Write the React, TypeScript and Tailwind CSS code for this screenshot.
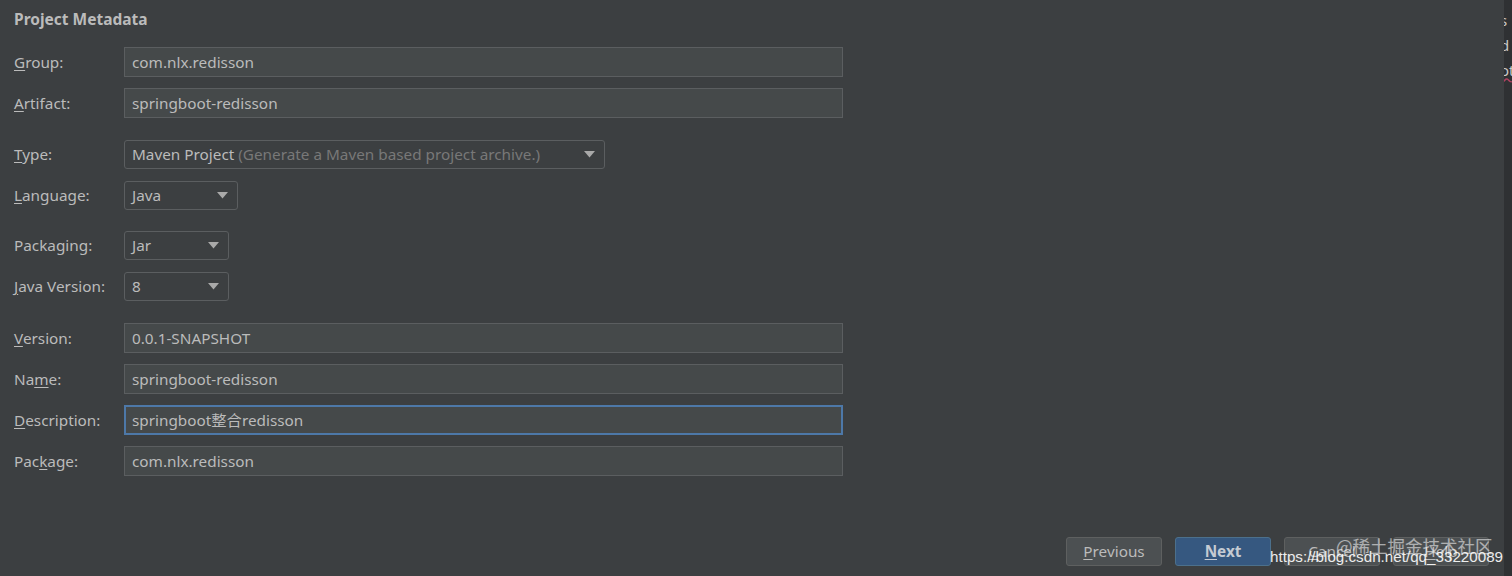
import React from 'react';

const font = { fontFamily: '"Noto Sans", "Noto Sans CJK SC", sans-serif' };

function Label({ text, mnemonic }: { text: string; mnemonic?: number }) {
  if (mnemonic === undefined) return <span>{text}</span>;
  return (
    <span>
      {text.slice(0, mnemonic)}
      <span className="underline underline-offset-2">{text[mnemonic]}</span>
      {text.slice(mnemonic + 1)}
    </span>
  );
}

function Arrow() {
  return (
    <svg width="11" height="7" viewBox="0 0 11 7" className="shrink-0">
      <path d="M0 0 H11 L5.5 6.5 Z" fill="#a9a9a9" />
    </svg>
  );
}

function Row({ label, mnemonic, children, className = '' }: { label: string; mnemonic?: number; children: React.ReactNode; className?: string }) {
  return (
    <div className={`flex items-center ${className}`}>
      <div className="w-[110px] shrink-0 text-[15.3px] text-[#bbbbbb]">
        <Label text={label} mnemonic={mnemonic} />
      </div>
      {children}
    </div>
  );
}

function TextInput({ value, focused = false }: { value: string; focused?: boolean }) {
  return (
    <div
      className={`w-[719px] h-[30px] flex items-center bg-[#45494a] text-[15.3px] text-[#bbbbbb] ${
        focused ? 'border-2 border-[#4d78a8] px-[6px]' : 'border border-[#5b5e60] px-[7px]'
      }`}
    >
      {value}
    </div>
  );
}

function Select({ width, children }: { width: string; children: React.ReactNode }) {
  return (
    <div className={`${width} h-[29px] flex items-center justify-between pl-[7px] pr-[9px] rounded-[3px] border border-[#5b5e60] bg-[#3c3f41] text-[15.3px] text-[#bbbbbb]`}>
      <span className="whitespace-nowrap">{children}</span>
      <Arrow />
    </div>
  );
}

function Button({ text, mnemonic, primary = false }: { text: string; mnemonic: number; primary?: boolean }) {
  return (
    <div
      className={`w-[96px] h-[29px] flex items-center justify-center rounded-[3px] border text-[15.3px] ${
        primary ? 'bg-[#365880] border-[#4c708c] font-bold text-[#c5cbd3]' : 'bg-[#4c5052] border-[#5e6060] text-[#bbbbbb]'
      }`}
    >
      <Label text={text} mnemonic={mnemonic} />
    </div>
  );
}

export default function App() {
  return (
    <div className="w-[1512px] h-[576px] flex bg-[#3c3f41] overflow-hidden relative" style={font}>
      <div className="flex-1 flex flex-col pl-[14px] pt-[8px] pr-[15px]">
        <div className="text-[15.5px] font-bold text-[#bbbbbb] h-[22px] leading-[22px]">Project Metadata</div>

        <div className="flex flex-col gap-[11px] mt-[17px]">
          <Row label="Group:" mnemonic={0}><TextInput value="com.nlx.redisson" /></Row>
          <Row label="Artifact:" mnemonic={0}><TextInput value="springboot-redisson" /></Row>

          <Row label="Type:" mnemonic={0} className="mt-[11px]">
            <Select width="w-[481px]">
              Maven Project <span className="text-[#787878]">(Generate a Maven based project archive.)</span>
            </Select>
          </Row>
          <Row label="Language:" mnemonic={0} className="mt-[1px]">
            <Select width="w-[114px]">Java</Select>
          </Row>

          <Row label="Packaging:" className="mt-[10px]">
            <Select width="w-[105px]">Jar</Select>
          </Row>
          <Row label="Java Version:" mnemonic={0} className="mt-[1px]">
            <Select width="w-[105px]">8</Select>
          </Row>

          <Row label="Version:" mnemonic={0} className="mt-[11px]"><TextInput value="0.0.1-SNAPSHOT" /></Row>
          <Row label="Name:" mnemonic={2}><TextInput value="springboot-redisson" /></Row>
          <Row label="Description:" mnemonic={0}><TextInput value="springboot整合redisson" focused /></Row>
          <Row label="Package:" mnemonic={3}><TextInput value="com.nlx.redisson" /></Row>
        </div>

        <div className="flex justify-end gap-[13px] mt-auto mb-[10px]">
          <Button text="Previous" mnemonic={0} />
          <Button text="Next" mnemonic={0} primary />
          <Button text="Cancel" mnemonic={0} />
          <Button text="Help" mnemonic={0} />
        </div>
      </div>

      <div className="w-[8px] shrink-0 bg-[#2f3133] overflow-hidden text-[15px] text-[#c8c8c8] relative">
        <div className="absolute left-[-4px] top-[8px] leading-[25px] whitespace-nowrap">
          <div>s</div>
          <div>d</div>
          <div className="underline decoration-wavy decoration-[#b04060]">ot</div>
        </div>
      </div>

      <div className="absolute left-[1336px] top-[533px] text-[17.5px] text-white/55 whitespace-nowrap" style={{ fontFamily: '"Noto Sans CJK SC", sans-serif' }}>
        @稀土掘金技术社区
      </div>
      <div className="absolute left-[1270px] top-[546px] text-[15.2px] text-white/90 whitespace-nowrap" style={{ fontFamily: '"Liberation Sans", Arial, sans-serif' }}>
        https://blog.csdn.net/qq_33220089
      </div>
    </div>
  );
}
